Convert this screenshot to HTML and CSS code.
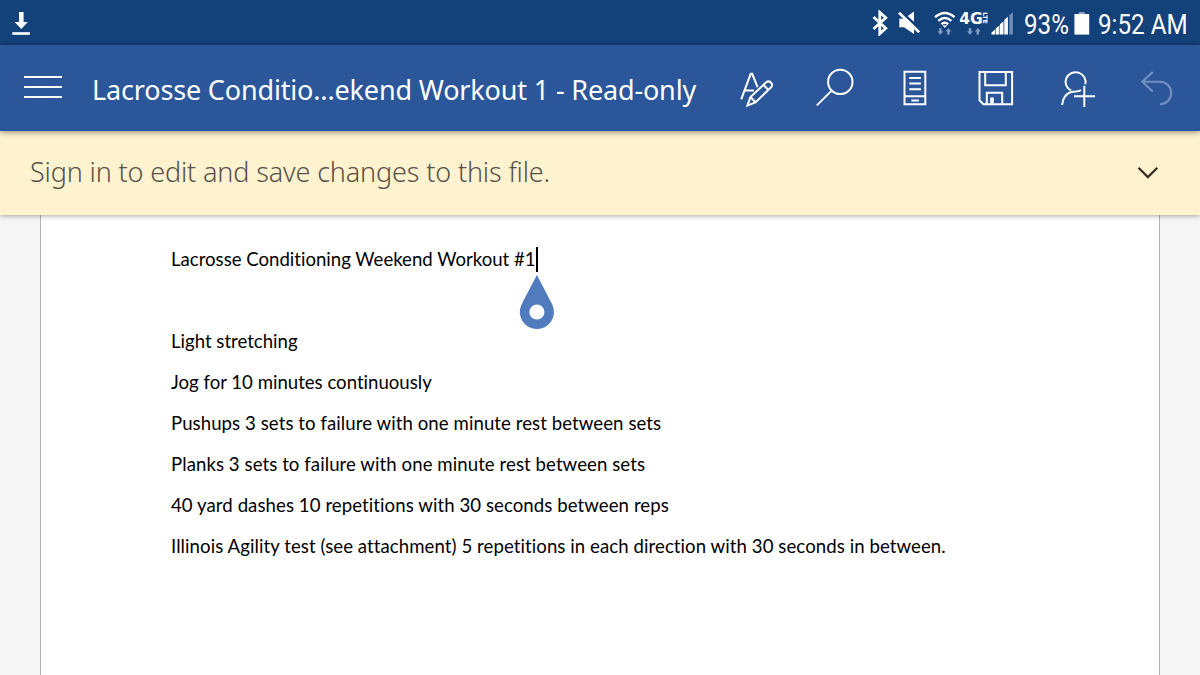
FILE: index.html
```html
<!DOCTYPE html>
<html lang="en">
<head>
  <meta charset="UTF-8" />
  <meta name="viewport" content="width=device-width, initial-scale=1.0"/>
  <title>Lacrosse Conditioning Weekend Workout 1</title>
  <link rel="stylesheet" href="styles.css">
</head>
<body>
  <div class="status-bar">
    <svg class="download" width="20" height="26" viewBox="0 0 20 26">
      <path d="M7 2h4.6v10h4.2L9.3 19 2.6 12H7z" fill="#fff"/>
      <path d="M.3 22.2h17.6v2.6H.3z" fill="#fff"/>
    </svg>
    <div class="status-right">
      <svg width="142" height="26" viewBox="0 0 142 26">
        <!-- bluetooth -->
        <path d="M1.5 7l12.3 11.2-6 5.5V2.3l6 5.5L1.5 19" fill="none" stroke="#fff" stroke-width="2.8"/>
        <!-- muted speaker -->
        <path d="M27.3 8.8h4.6L42 1.5v22.5l-10-6.7h-4.7z" fill="#fff"/>
        <path d="M28.6 1.2l21 19.6" stroke="#13417a" stroke-width="2.6"/>
        <path d="M27 2.8l20.2 19.4" stroke="#fff" stroke-width="2.6"/>
        <!-- wifi -->
        <g fill="none" stroke="#fff" stroke-width="2.4">
          <path d="M63 7.2q9.8-8.6 19.6 0M66.3 10.8q6.5-5.4 13 0M69.4 14.2q3.4-2.8 6.8 0"/>
        </g>
        <path d="M70.3 15.3h5l-2.5 2.7z" fill="#fff"/>
        <g class="arrows">
          <path d="M67.2 18h2.4v3.2h1.8l-3 3.6-3-3.6h1.8zM75.2 24.8h2.4v-3.2h1.8l-3-3.6-3 3.6h1.8z"/>
          <path d="M96.8 18h2.4v3.2h1.8l-3 3.6-3-3.6h1.8zM104.6 24.8h2.4v-3.2h1.8l-3-3.6-3 3.6h1.8z"/>
        </g>
        <text class="net" x="87.3" y="14" textLength="23.5" lengthAdjust="spacingAndGlyphs">4G</text>
        <text class="lte" transform="translate(110.8 2.2) rotate(90)" textLength="11.5" lengthAdjust="spacingAndGlyphs">LTE</text>
        <!-- signal -->
        <path d="M119.5 24.5v-2l3.6-3v5zM123.7 24.5v-6l3.6-3v9zM127.9 24.5V14.2l3.6-3v13.3zM132.3 24.5V9.8l3.6-3v17.7z" fill="#fff"/>
        <path d="M137.3 24.5V5.2l3.6-3v22.3z" fill="#6f8db4"/>
      </svg>
      <span class="battery-level"><span>93%</span></span>
      <svg class="battery" width="16" height="26" viewBox="0 0 16 26">
        <path d="M4.8 2h6v3h-6z" fill="#8aa3c4"/>
        <path d="M.4 4h14.8v20.6H.4z" fill="#fff"/>
      </svg>
      <span class="clock"><span>9:52 AM</span></span>
    </div>
  </div>

  <div class="app-bar">
    <button class="menu" aria-label="Menu"><i></i><i></i><i></i></button>
    <h1>Lacrosse Conditio...ekend Workout 1 - Read-only</h1>
    <div class="tools">
      <svg viewBox="0 0 40 40">
        <path d="M6.2 31.3L15.7 5.8h1.5l5.4 13.4M10 22.6h9"/>
        <path d="M12.4 37.6l3-8.5L31.2 14.2c3.2-2.3 7.6 1.4 5 4.9L20.4 34.4zM15.5 29l5 5.3M28.5 17l5 5"/>
      </svg>
      <svg viewBox="0 0 40 40">
        <circle cx="25.3" cy="13.9" r="12.2"/>
        <path d="M16.7 22.6L1.8 37.4"/>
      </svg>
      <svg viewBox="0 0 40 40">
        <path d="M9.5 3.8h20.8v32.4H9.5zM9.5 28.3h20.8M14.3 10h11.6M14.3 15.6h11.6M14.3 21.2h11.6M16.3 32.4h7.6"/>
      </svg>
      <svg viewBox="0 0 40 40">
        <path d="M4.5 4h32.6v32.3H8.4l-3.9-4zM10.2 4v13.3h20.6V4M11.8 36.3V24.8h15.4v11.5"/>
        <path class="solid" d="M15.2 29.5h3.6v6h-3.6z"/>
      </svg>
      <svg viewBox="0 0 40 40">
        <path d="M30.3 16.2A10 9.7 0 1 0 16.2 22.6M7.2 37C8.2 28 13 23.6 20.8 23.6q3.2-.1 5.2-1.6M29.3 17.8V39M19 28.3h21"/>
      </svg>
      <svg class="disabled" viewBox="0 0 40 40">
        <path d="M17.7 4L7.3 13.8l10.4 9.8M7.3 13.8H25a11.2 11.2 0 0 1 0 22.4"/>
      </svg>
    </div>
  </div>

  <div class="sign-in">
    <p>Sign in to edit and save changes to this file.</p>
    <svg width="24" height="16" viewBox="0 0 24 16">
      <path d="M2.5 2.7l9.4 9.4 9.4-9.4" fill="none" stroke="#332d22" stroke-width="2.2"/>
    </svg>
  </div>

  <div class="page">
    <p class="heading"><span>Lacrosse Conditioning Weekend Workout #1<span class="caret">
      <svg width="36" height="56" viewBox="0 0 36 56">
        <path d="M17.9 1L31.7 27.5C35 33 35.5 38 34.6 41.5A17.1 17.1 0 0 1 1.2 41.5C.2 37 1 33 4 27.5z" fill="#507cbe"/>
        <circle cx="17.9" cy="38" r="7.6" fill="#fff"/>
      </svg>
    </span></span></p>
    <p class="blank"></p>
    <p class="tight">Light stretching</p>
    <p class="tight">Jog for 10 minutes continuously</p>
    <p>Pushups 3 sets to failure with one minute rest between sets</p>
    <p>Planks 3 sets to failure with one minute rest between sets</p>
    <p>40 yard dashes 10 repetitions with 30 seconds between reps</p>
    <p>Illinois Agility test (see attachment) 5 repetitions in each direction with 30 seconds in between.</p>
  </div>
</body>
</html>
```

FILE: styles.css
```css
:root {
  --status: #13417a;
  --bar: #2b579a;
  --notice: #fff2cf;
}

* {
  box-sizing: border-box;
}

body {
  margin: 0;
  height: 100vh;
  overflow: hidden;
  display: flex;
  flex-direction: column;
  background: #f6f6f6;
  font-family: "Noto Sans", sans-serif;
}

.status-bar {
  height: 45px;
  flex: none;
  display: flex;
  align-items: center;
  justify-content: space-between;
  padding: 0 11px 0 12px;
  background: var(--status);
  color: #fff;
  font-family: Roboto, sans-serif;
  font-size: 27.5px;
}

.status-right {
  display: flex;
  align-items: center;
}

.status-right > span {
  line-height: 45px;
  padding-top: 3px;
}

.status-right > span > span {
  display: inline-block;
  transform: scaleX(0.88);
  transform-origin: 0 50%;
}

.battery-level {
  width: 45px;
  margin-left: 10px;
}

.battery {
  margin: 0 8px 0 5px;
}

.clock {
  width: 91px;
  white-space: nowrap;
}

.arrows {
  fill: #7f9cc4;
}

.net {
  fill: #fff;
  font: 700 16px "DejaVu Sans", sans-serif;
}

.lte {
  fill: #fff;
  font: 700 6px "DejaVu Sans", sans-serif;
}

.app-bar {
  height: 86px;
  flex: none;
  display: flex;
  align-items: center;
  padding: 0 25px 0 24px;
  background: var(--bar);
  color: #fff;
  position: relative;
  z-index: 2;
  box-shadow: 0 1px 6px rgba(0, 0, 0, 0.45);
}

.menu {
  width: 38px;
  margin-top: -2px;
  padding: 0;
  border: 0;
  background: none;
  display: flex;
  flex-direction: column;
  gap: 8px;
}

.menu i {
  height: 2px;
  background: #fff;
}

.app-bar h1 {
  margin: 3px 0 0 30px;
  font-size: 27px;
  font-weight: 400;
  letter-spacing: -0.16px;
  white-space: nowrap;
}

.tools {
  display: flex;
  gap: 40px;
  margin-left: auto;
}

.tools svg {
  width: 40px;
  height: 40px;
  overflow: visible;
  fill: none;
  stroke: #fff;
  stroke-width: 2;
}

.tools .solid {
  fill: #fff;
  stroke: none;
}

.tools .disabled {
  stroke: #7690c2;
}

.sign-in {
  height: 84px;
  flex: none;
  display: flex;
  align-items: center;
  justify-content: space-between;
  padding: 0 40px 0 30px;
  background: var(--notice);
  position: relative;
  z-index: 1;
  box-shadow: 0 1px 5px rgba(0, 0, 0, 0.35);
}

.sign-in p {
  margin: -4px 0 0;
  font-size: 27px;
  font-weight: 350;
  letter-spacing: -0.15px;
  color: #57524a;
}

.page {
  flex: 1;
  margin: 0 40px;
  padding: 23.5px 0 0 130px;
  background: #fff;
  border: solid #b4b4b4;
  border-width: 0 1px;
  color: #000;
  font-family: Lato, sans-serif;
  font-size: 18.6px;
  font-variant-ligatures: none;
  letter-spacing: 0.07px;
}

.page p {
  margin: 0;
  height: 41.15px;
  line-height: 41.15px;
  white-space: nowrap;
}

.page .heading,
.page .tight {
  letter-spacing: 0;
}

.heading > span {
  position: relative;
}

/* text cursor with its drag handle */
.caret {
  position: absolute;
  right: -2px;
  top: -1px;
  width: 2px;
  height: 25px;
  background: #000;
}

.caret svg {
  position: absolute;
  left: -17px;
  top: 27px;
}
```
